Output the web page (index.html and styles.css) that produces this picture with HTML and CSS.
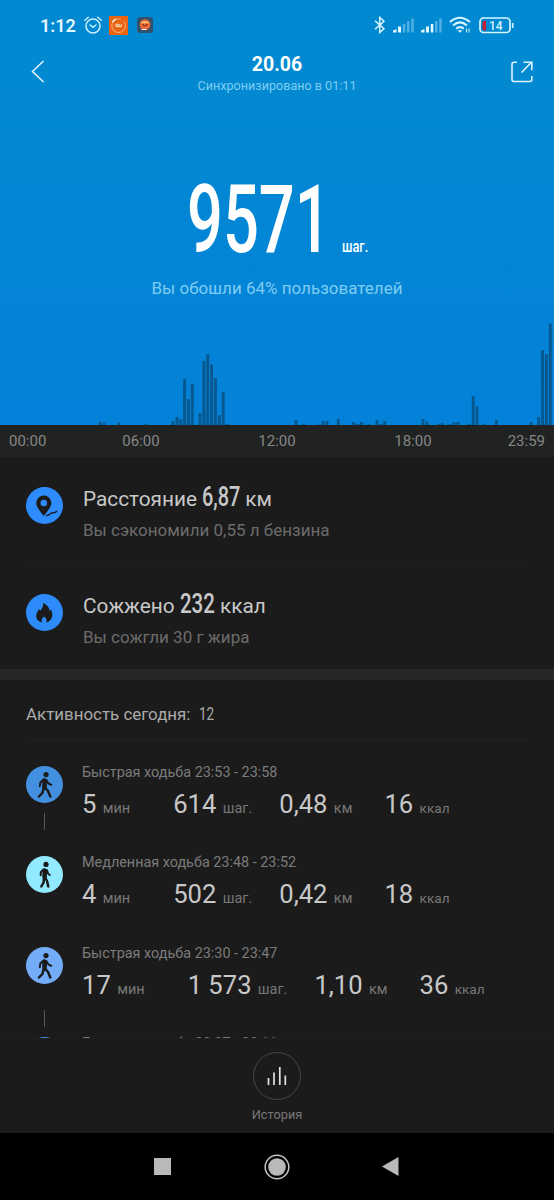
FILE: index.html
```html
<!DOCTYPE html>
<html lang="ru">
<head>
<meta charset="utf-8">
<title>Шаги</title>
<link rel="stylesheet" href="styles.css">
</head>
<body>
<svg class="defs" aria-hidden="true">
  <symbol id="walk-fast" viewBox="0 0 38 38">
    <g fill="none" stroke="#1b1b1b" stroke-linecap="round" stroke-linejoin="round">
      <circle cx="20" cy="8.600" r="2.600" fill="#1b1b1b" stroke="none"/>
      <path d="M18.700 14.500L18.500 21" stroke-width="4.600"/>
      <path d="M17.500 13.500l-3.100 3-.6 3.700M20.500 14.200l2 3.300 2.800 1.300" stroke-width="2"/>
      <path d="M19 21.500l3 3.500 2.300 5.500M17.800 21.500l-1.300 5.300-3.600 3.700" stroke-width="2.500"/>
    </g>
  </symbol>
  <symbol id="walk-slow" viewBox="0 0 38 38">
    <g fill="none" stroke="#1b1b1b" stroke-linecap="round" stroke-linejoin="round">
      <circle cx="20" cy="8.400" r="2.600" fill="#1b1b1b" stroke="none"/>
      <path d="M18.800 14.500L18.600 21" stroke-width="4.600"/>
      <path d="M17.200 13.600l-2.400 2.600-.1 3.100M21 14.200l1 3.200 1.800 1.500" stroke-width="2"/>
      <path d="M19.200 21.500l1.900 3.700 1.200 5.300M18 21.500l-.4 5-2.300 4" stroke-width="2.500"/>
    </g>
  </symbol>
</svg>
<main class="screen">
  <section class="hero">
    <div class="status">
      <span class="clock">1:12</span>
      <svg class="alarm" width="20" height="20" viewBox="0 0 20 20" fill="none" stroke="#c9f1ff" stroke-width="1.500" stroke-linecap="round"><circle cx="10" cy="11" r="7"/><path d="M7 10l3 2.400 3-2.400M1.800 5.200l3.500-3M18.200 5.200l-3.500-3"/></svg>
      <svg class="app-one" width="19" height="19" viewBox="0 0 19 19"><path fill="#e96411" d="M0 0h19v19H0z"/><circle cx="9.600" cy="9.700" r="6.800" fill="none" stroke="#f9b68c" stroke-width="1" stroke-dasharray="34 4"/><path d="M3.500 6l3-3" stroke="#fff" stroke-width="1.500"/><path d="M7 8.200v2.400h2.200V8.200H7M10 8v2.600h2.300V8" fill="none" stroke="#ffe7d5" stroke-width="1"/></svg>
      <svg class="app-two" width="16" height="16" viewBox="0 0 16 16"><rect width="16" height="16" rx="3.500" fill="#30506b"/><circle cx="8" cy="7.500" r="5.300" fill="#ef6b35"/><path d="M4 5.200Q8 3.500 12 5.200v1H4z" fill="#ffbd7b"/><path d="M5.500 7.200q2.500 3.400 5 0" fill="none" stroke="#903225" stroke-width="1.400"/><path d="M4.500 12.500h5" stroke="#fff"/></svg>
      <span class="spacer"></span>
      <svg class="bt" width="12" height="18" viewBox="0 0 12 18" fill="none" stroke="#d8f5ff" stroke-width="1.500"><path d="M1 4.800l9 8-4.300 3.700V1.500L10 5.200l-9 8"/></svg>
      <svg class="signal" width="21" height="16" viewBox="0 0 21 16"><path d="M0 15.500v-2l3.500-1.500v3.500zM5 15.500V9.500h3v6z" fill="#e3f7ff"/><path d="M9.800 15.500V7h2.500v8.500zM14 15.500V4h2.500v11.500zM18.200 15.500V1.500h2.500v14z" fill="#51b0e3"/></svg>
      <svg class="signal" width="21" height="16" viewBox="0 0 21 16"><path d="M0 15.500v-2l3.500-1.500v3.500zM5 15.500V9.500h3v6zM9.800 15.500V7h2.500v8.500z" fill="#e3f7ff"/><path d="M14 15.500V4h2.500v11.500zM18.200 15.500V1.500h2.500v14z" fill="#51b0e3"/></svg>
      <svg class="wifi" width="22" height="18" viewBox="0 0 22 18" fill="none" stroke="#d8f5ff" stroke-width="2"><path d="M1 6q9.500-8.500 20 0M4 9.400q7-6 14 0M7.200 12.600q3.800-3 7.600 0"/><path d="M8.500 14.200h5L11 16.800z" fill="#d8f5ff" stroke="none"/><path d="M17.500 12.500v4M20 12.500v4" stroke-width="1"/></svg>
      <svg class="battery" width="35" height="17" viewBox="0 0 35 17"><rect x="1" y="1" width="30" height="14.500" rx="3.500" fill="none" stroke="#d8f5ff" stroke-width="1.700"/><path d="M33.700 6v5" stroke="#d8f5ff" stroke-width="1.600"/><path d="M7 3.500v10H5.500Q3.500 13 3.500 11V6q0-2 2-2.500z" fill="#c51c32"/><text x="16.700" y="12.500" class="battery-text">14</text></svg>
    </div>
    <header class="bar">
      <svg width="14" height="23" viewBox="0 0 14 23" fill="none" stroke="#e6f8ff" stroke-width="1.500"><path d="M12.500 1L1.500 11.500l11 10.500"/></svg>
      <div class="heading">
        <h1>20.06</h1>
        <p>Синхронизировано в 01:11</p>
      </div>
      <svg class="share" width="22" height="22" viewBox="0 0 22 22" fill="none" stroke="#dff5ff" stroke-width="1.600"><path d="M10.500 11.500L20.500 1.200M12.500 1.200h8.300v8M20.800 15v3.500q0 2-2 2H3q-2 0-2-2V3.200q0-2 2-2h3"/></svg>
    </header>
    <div class="total"><span class="total-num"><b>9571</b></span><span class="total-unit"><b>шаг.</b></span></div>
    <p class="rank">Вы обошли 64% пользователей</p>
    <svg class="chart" width="554" height="110" viewBox="0 0 554 110"><path stroke="#07588e" stroke-width="2.900" d="M100 110v-3M104 110v-2.400M119 110v-2.200M146 110v-1M173 110v-4M177 110v-8M180.700 110v-6M184.600 110v-46M188.400 110v-26M192.300 110v-41M200 110v-12M203.900 110v-64M207.700 110v-71M211.600 110v-60.500M215.400 110v-47M219.300 110v-10M223.200 110v-33M227 110v-1M296 110v-5M303.700 110v-1M319 110v-.500M323 110v-4M327 110v-4M338.300 110v-6M353.700 110v-3M357.700 110v-1M361.600 110v-3M369 110v-.700M377 110v-5M381 110v-1M384.700 110v-4M423 110v-6M427 110v-3.500M438.700 110v-1M442.400 110v-2M450 110v-.700M454 110v-3M457.800 110v-3M469.300 110v-1M473.200 110v-29M477 110v-18.500M484.700 110v-1M496.300 110v-5M531 110v-3M538.700 110v-8M542.600 110v-75M546.400 110v-71M550.300 110v-101.500"/></svg>
  </section>
  <div class="axis"><span>00:00</span><span>06:00</span><span>12:00</span><span>18:00</span><span>23:59</span></div>
  <section class="metrics">
    <div class="metric">
      <svg width="37" height="37" viewBox="0 0 37 37"><circle cx="18.500" cy="18.500" r="18.500" fill="#2d8bfb"/><path fill-rule="evenodd" d="M17.800 29q-7.600-9-7.600-13a7.600 7.600 0 0 1 15.200 0q0 4-7.600 13zM17.800 12.700a3.300 3.300 0 1 0 0 6.600 3.300 3.300 0 1 0 0-6.600" fill="#1b1b1b"/><path d="M20 28.500c4 1 4-3.500 7.200-2.600q2 .2 3.800-1.900" fill="none" stroke="#1b1b1b" stroke-width="1.400"/></svg>
      <div><h2>Расстояние <span class="n687"><b>6,87</b></span> км</h2><p>Вы сэкономили 0,55 л бензина</p></div>
    </div>
    <div class="metric">
      <svg width="37" height="37" viewBox="0 0 37 37"><circle cx="18.500" cy="18.500" r="18.500" fill="#2d8bfb"/><path d="M17 9c4.600 2 6.600 5 6.500 8l1.500-1.500c2 4 2 8.500-1.500 11.500q-1.700 1.200-3.500 1.500c1.500-2 .5-4-1.800-6-2.500 2-3.500 4-2 6-4-.8-6.200-3.500-6-7 .2-3 2-4.500 2.500-6.500l1.500 1.500c2.500-2.500 3.300-4.500 2.800-7.500z" fill="#1b1b1b"/></svg>
      <div><h2>Сожжено <span class="n232"><b>232</b></span> ккал</h2><p>Вы сожгли 30 г жира</p></div>
    </div>
  </section>
  <section class="activity">
    <h3>Активность сегодня: <span class="n12"><b>12</b></span></h3>
    <ul>
      <li>
        <div class="rail"><span class="dot c1"><svg width="38" height="38"><use href="#walk-fast"/></svg></span><i></i></div>
        <div class="info"><p>Быстрая ходьба 23:53 - 23:58</p><div class="vals"><span>5 <small>мин</small></span><span>614 <small>шаг.</small></span><span>0,48 <small>км</small></span><span>16 <small>ккал</small></span></div></div>
      </li>
      <li>
        <div class="rail"><span class="dot c2"><svg width="38" height="38"><use href="#walk-slow"/></svg></span></div>
        <div class="info"><p>Медленная ходьба 23:48 - 23:52</p><div class="vals"><span>4 <small>мин</small></span><span>502 <small>шаг.</small></span><span>0,42 <small>км</small></span><span>18 <small>ккал</small></span></div></div>
      </li>
      <li>
        <div class="rail"><span class="dot c3"><svg width="38" height="38"><use href="#walk-fast"/></svg></span><i class="low"></i></div>
        <div class="info"><p>Быстрая ходьба 23:30 - 23:47</p><div class="vals"><span>17 <small>мин</small></span><span>1 573 <small>шаг.</small></span><span>1,10 <small>км</small></span><span>36 <small>ккал</small></span></div></div>
      </li>
      <li>
        <div class="rail"><span class="dot c1"></span></div>
        <div class="info"><p>Быстрая ходьба 23:07 - 23:11</p></div>
      </li>
    </ul>
  </section>
  <footer class="history">
    <span class="ring"><svg width="20" height="20" viewBox="0 0 20 20" stroke="#e2e2e2" stroke-width="1.700"><path d="M1.500 19v-7M7 19V6.500M12.800 19V1M18.300 19V9.500"/></svg></span>
    <span class="history-label">История</span>
  </footer>
  <nav class="nav">
    <svg width="17" height="17"><path fill="#b9b9b9" d="M0 0h17v17H0z"/></svg>
    <svg width="26" height="26"><circle cx="13" cy="13" r="11.800" fill="none" stroke="#c4c4c4" stroke-width="1.500"/><circle cx="13" cy="13" r="8.800" fill="#b9b9b9"/></svg>
    <svg width="17" height="19"><path fill="#b9b9b9" d="M0 9.500L16.500 0v19z"/></svg>
  </nav>
</main>
</body>
</html>
```
FILE: styles.css
```css
* { box-sizing: border-box; margin: 0; padding: 0; }
body { background: #000; font-family: Roboto, "Noto Sans", sans-serif; font-weight: 400; }
.defs { display: none; }
svg { display: block; flex: none; }
.screen { width: 554px; height: 1200px; display: flex; flex-direction: column; background: #1b1b1b; overflow: hidden; }

.hero { height: 425px; flex: none; display: flex; flex-direction: column; background: linear-gradient(#0089d1, #0289d2 25%, #0481d9); }
.status { height: 50px; flex: none; display: flex; align-items: center; padding: 0 40px 0 40px; }
.clock { width: 43px; font-size: 18px; font-weight: 600; color: #e4f8ff; white-space: nowrap; }
.app-one { margin-left: 6px; }
.app-two { margin-left: 9px; }
.spacer { flex: 1; }
.bt { margin-right: 7px; }
.signal { margin-right: 7px; }
.wifi { margin-right: 8px; }
.battery-text { font: 500 12px Roboto, sans-serif; fill: #d8f5ff; text-anchor: middle; }
.bar { height: 50px; flex: none; display: flex; justify-content: space-between; align-items: flex-start; padding: 0 21px 0 31px; }
.bar > svg { margin-top: 10px; }
.bar > .share { margin-top: 11px; }
.heading { text-align: center; margin-left: -2px; padding-top: 1px; }
.heading h1 { font-size: 19.500px; line-height: 27px; font-weight: 700; color: #fff; }
.heading p { font-size: 12.600px; line-height: 16px; color: #7fcdf3; white-space: nowrap; }
.total { height: 118px; margin-top: 61px; padding-left: 187px; display: flex; align-items: baseline; color: #fff; }
.total-num { width: 155px; font-size: 95px; line-height: 118px; }
.total-unit { font-size: 17px; }
.total b, .metric b, .activity b { display: inline-block; transform-origin: 0 50%; font-weight: 500; white-space: nowrap; }
.total-num b { transform: scaleX(.665); }
.total-unit b { transform: scaleX(.75); }
.rank { height: 24px; margin-top: -3px; line-height: 24px; text-align: center; font-size: 17px; color: #7fcdf3; }
.chart { margin-top: auto; }

.axis { height: 32px; flex: none; display: grid; grid-template-columns: 73px 136px 136px 136px 73px; text-align: center; background: #212322; color: #868686; font-size: 15px; line-height: 33px; }
.axis span:first-child { text-align: left; padding-left: 9px; }
.axis span:last-child { text-align: right; padding-right: 9px; }

.metrics { height: 212px; flex: none; padding: 0 26px; }
.metric { height: 106px; display: flex; padding-top: 30px; }
.metric + .metric { border-top: 1px solid #202020; }
.metric > div { margin-left: 20px; white-space: nowrap; }
.metric h2 { font-size: 20.800px; line-height: 26px; margin-top: -1px; font-weight: 400; color: #c8c8c8; }
.metric p { font-size: 17px; line-height: 36px; color: #6c6c6c; }
.metric h2 span { display: inline-block; height: 26px; line-height: 21px; vertical-align: top; font-size: 28px; }
.n687 { width: 38px; }
.n232 { width: 35px; }
.n687 b { transform: scaleX(.71); }
.n232 b { transform: scaleX(.73); }

.activity { height: 369px; flex: none; border-top: 11px solid #252827; overflow: hidden; }
.activity h3 { height: 60px; margin: 0 26px; border-bottom: 1px solid #212121; font-size: 16.900px; line-height: 68px; font-weight: 400; color: #aaa; }
.n12 { margin-left: 4px; font-size: 18px; }
.n12 b { transform: scaleX(.75); font-weight: 400; }
ul { list-style: none; padding-top: 22px; }
li { height: 90.300px; display: flex; padding-left: 26px; }
.rail { width: 37px; display: flex; flex-direction: column; align-items: center; padding-top: 4px; }
.dot { width: 37px; height: 37px; border-radius: 50%; flex: none; }
.c1 { background: #4390e0; }
.c2 { background: #91eaff; }
.c3 { background: #73adf8; }
.rail i { width: 1px; height: 17px; margin-top: 10px; background: #5a5a5a; }
.rail i.low { margin-top: 26px; }
.info { margin-left: 19px; white-space: nowrap; }
.info p { font-size: 14.400px; line-height: 21px; color: #7b7b7b; }
.vals { display: flex; line-height: 42px; font-size: 25.600px; color: #c8c8c8; }
.vals small { font-size: 14.500px; color: #777; }
.vals span { margin-right: 43px; }
.vals span:nth-child(2) { margin-right: 27px; }
.vals span:nth-child(3) { margin-right: 32px; }
.vals span:nth-child(4) small { font-size: 13.600px; }

.history { height: 95px; flex: none; display: flex; flex-direction: column; align-items: center; padding-top: 13px; border-top: 1px solid #1f1f1f; }
.ring { width: 48px; height: 48px; border: 1px solid #464646; border-radius: 50%; display: flex; align-items: center; justify-content: center; }
.history-label { margin-top: 5px; font-size: 12.800px; line-height: 20px; color: #777; }
.nav { height: 67px; flex: none; background: #000; display: flex; align-items: center; justify-content: space-between; padding: 0 155px 0 154px; }
```
